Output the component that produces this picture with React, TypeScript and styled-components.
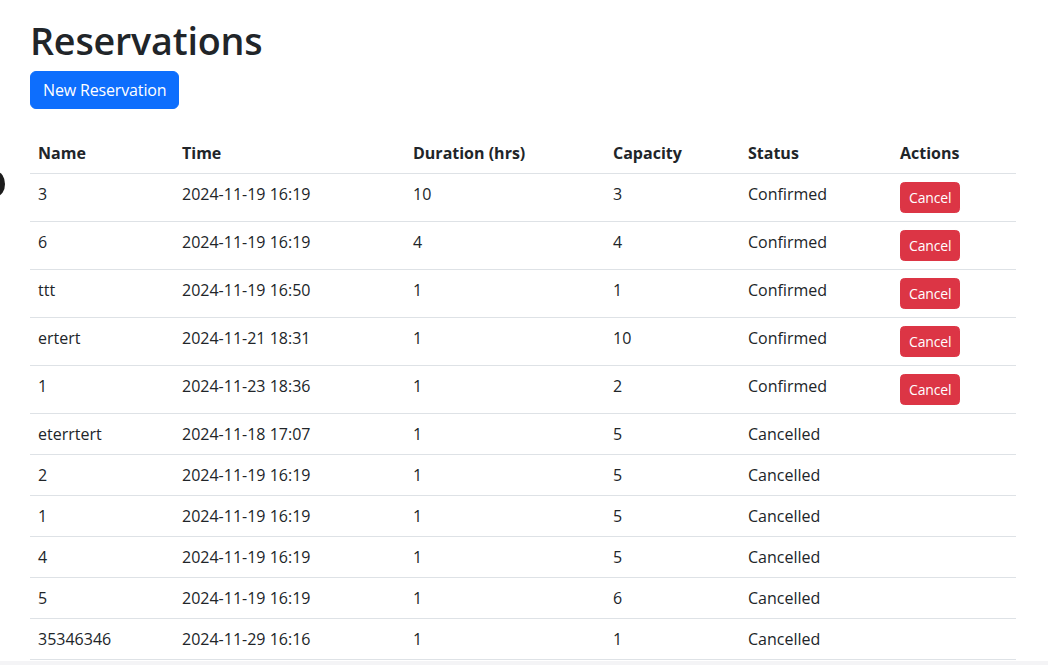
import React from "react";
import styled, { createGlobalStyle } from "styled-components";

const GlobalStyle = createGlobalStyle`
  html, body {
    margin: 0;
    padding: 0;
    background: #ffffff;
    color: #212529;
    font-family: "Open Sans", "Noto Sans", sans-serif;
    font-size: 16px;
    line-height: 1.5;
    overflow: hidden;
  }
  * { box-sizing: border-box; }
`;

const Page = styled.div`
  position: relative;
  width: 1048px;
  height: 665px;
  display: flex;
  flex-direction: column;
  overflow: hidden;
`;

const Content = styled.main`
  padding: 18px 32px 0 30px;
  display: flex;
  flex-direction: column;
  align-items: flex-start;
`;

const Title = styled.h1`
  margin: 0 0 8px 0;
  font-size: 37.7px;
  font-weight: 600;
  line-height: 1.2;
  letter-spacing: -0.2px;
  color: #212529;
`;

const PrimaryButton = styled.button`
  font-family: inherit;
  font-size: 16px;
  line-height: 24px;
  padding: 6px 12px;
  border: 1px solid #0d6efd;
  border-radius: 6px;
  background: #0d6efd;
  color: #ffffff;
  letter-spacing: -0.15px;
  cursor: pointer;
`;

const Table = styled.table`
  margin-top: 24px;
  width: 986px;
  border-collapse: collapse;
  table-layout: fixed;
`;

const Th = styled.th<{ $width: number }>`
  width: ${(p) => p.$width}px;
  text-align: left;
  font-weight: 700;
  padding: 8px;
  line-height: 24px;
  vertical-align: bottom;
  border-bottom: 1px solid #dee2e6;
`;

const Td = styled.td`
  padding: 8px;
  line-height: 24px;
  vertical-align: top;
  border-bottom: 1px solid #dee2e6;
  white-space: nowrap;
`;

const DangerButton = styled.button`
  font-family: inherit;
  font-size: 14px;
  line-height: 21px;
  padding: 4px 8px;
  border: 1px solid #dc3545;
  border-radius: 4.4px;
  background: #dc3545;
  color: #ffffff;
  letter-spacing: -0.15px;
  cursor: pointer;
  display: block;
`;

const EdgeBlob = styled.div`
  position: absolute;
  left: -11px;
  top: 172px;
  width: 16px;
  height: 24px;
  border-radius: 50%;
  background: #1c1c1c;
`;

const BottomStrip = styled.div`
  margin-top: 1px;
  height: 6px;
  background: #f4f4f6;
`;

type Row = {
  name: string;
  time: string;
  duration: number;
  capacity: number;
  status: "Confirmed" | "Cancelled";
};

const rows: Row[] = [
  { name: "3", time: "2024-11-19 16:19", duration: 10, capacity: 3, status: "Confirmed" },
  { name: "6", time: "2024-11-19 16:19", duration: 4, capacity: 4, status: "Confirmed" },
  { name: "ttt", time: "2024-11-19 16:50", duration: 1, capacity: 1, status: "Confirmed" },
  { name: "ertert", time: "2024-11-21 18:31", duration: 1, capacity: 10, status: "Confirmed" },
  { name: "1", time: "2024-11-23 18:36", duration: 1, capacity: 2, status: "Confirmed" },
  { name: "eterrtert", time: "2024-11-18 17:07", duration: 1, capacity: 5, status: "Cancelled" },
  { name: "2", time: "2024-11-19 16:19", duration: 1, capacity: 5, status: "Cancelled" },
  { name: "1", time: "2024-11-19 16:19", duration: 1, capacity: 5, status: "Cancelled" },
  { name: "4", time: "2024-11-19 16:19", duration: 1, capacity: 5, status: "Cancelled" },
  { name: "5", time: "2024-11-19 16:19", duration: 1, capacity: 6, status: "Cancelled" },
  { name: "35346346", time: "2024-11-29 16:16", duration: 1, capacity: 1, status: "Cancelled" },
];

const columns: { label: string; width: number }[] = [
  { label: "Name", width: 144 },
  { label: "Time", width: 231 },
  { label: "Duration (hrs)", width: 200 },
  { label: "Capacity", width: 135 },
  { label: "Status", width: 152 },
  { label: "Actions", width: 124 },
];

export default function App() {
  return (
    <Page>
      <GlobalStyle />
      <EdgeBlob />
      <Content>
        <Title>Reservations</Title>
        <PrimaryButton>New Reservation</PrimaryButton>
        <Table>
          <thead>
            <tr>
              {columns.map((c) => (
                <Th key={c.label} $width={c.width}>
                  {c.label}
                </Th>
              ))}
            </tr>
          </thead>
          <tbody>
            {rows.map((r, i) => (
              <tr key={i}>
                <Td>{r.name}</Td>
                <Td>{r.time}</Td>
                <Td>{r.duration}</Td>
                <Td>{r.capacity}</Td>
                <Td>{r.status}</Td>
                <Td>{r.status === "Confirmed" ? <DangerButton>Cancel</DangerButton> : null}</Td>
              </tr>
            ))}
          </tbody>
        </Table>
      </Content>
      <BottomStrip />
    </Page>
  );
}
